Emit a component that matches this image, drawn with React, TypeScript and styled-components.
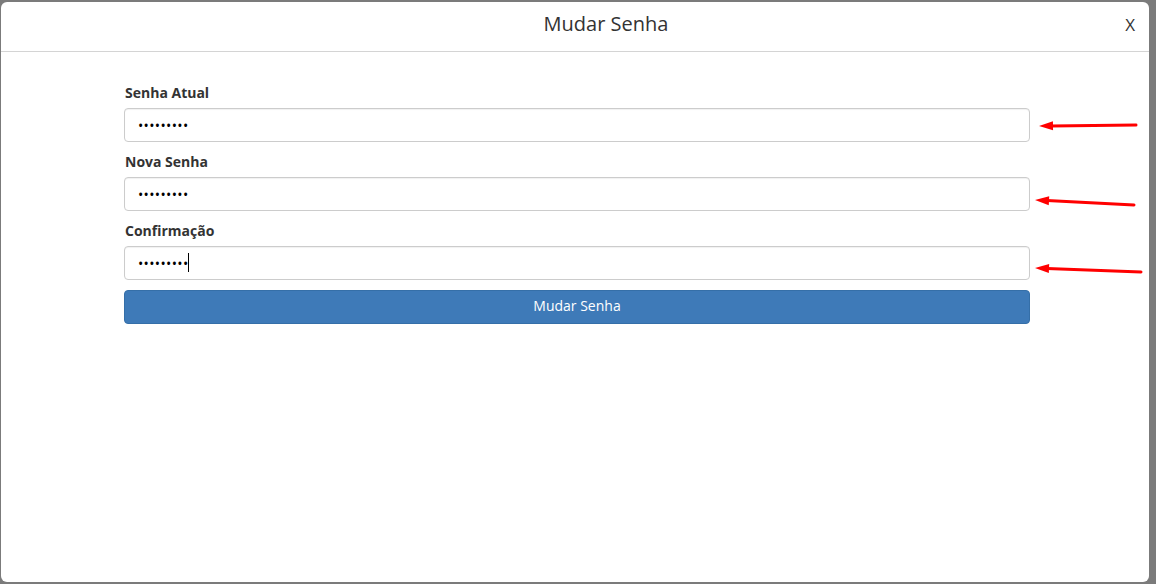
import React from "react";
import styled, { createGlobalStyle } from "styled-components";

const GlobalStyle = createGlobalStyle`
  html, body {
    margin: 0;
    padding: 0;
    background: #7b7b7b;
    font-family: "Open Sans", "Liberation Sans", Arial, sans-serif;
    color: #333;
  }
  * { box-sizing: border-box; }
`;

const fields = [
  { id: "atual", label: "Senha Atual", caret: false },
  { id: "nova", label: "Nova Senha", caret: false },
  { id: "confirmacao", label: "Confirmação", caret: true },
];

export default function App() {
  return (
    <Page>
      <GlobalStyle />
      <Modal>
        <Header>
          <Title>Mudar Senha</Title>
          <Close type="button">X</Close>
        </Header>
        <Body>
          <Form onSubmit={(e) => e.preventDefault()}>
            {fields.map((f) => (
              <Group key={f.id}>
                <Label htmlFor={f.id}>{f.label}</Label>
                <Field>
                  <Input id={f.id} type="password" defaultValue="123456789" />
                  {f.caret && <Caret />}
                </Field>
              </Group>
            ))}
            <Submit type="submit">Mudar Senha</Submit>
          </Form>
        </Body>
        <Arrows width="1156" height="584" viewBox="0 0 1156 584">
          <Arrow x1={1136} y1={125} x2={1039} y2={126} />
          <Arrow x1={1134} y1={205} x2={1035} y2={200} />
          <Arrow x1={1141} y1={272} x2={1035} y2={268} />
        </Arrows>
      </Modal>
    </Page>
  );
}

function Arrow({ x1, y1, x2, y2 }: { x1: number; y1: number; x2: number; y2: number }) {
  const dx = x2 - x1;
  const dy = y2 - y1;
  const len = Math.hypot(dx, dy);
  const ux = dx / len;
  const uy = dy / len;
  const head = 14;
  const half = 4.5;
  const bx = x2 - ux * head;
  const by = y2 - uy * head;
  const pts = [
    `${x2},${y2}`,
    `${bx - uy * half},${by + ux * half}`,
    `${bx + uy * half},${by - ux * half}`,
  ].join(" ");
  return (
    <g>
      <line x1={x1} y1={y1} x2={bx + ux * 2} y2={by + uy * 2} stroke="#f00" strokeWidth={3} strokeLinecap="round" />
      <polygon points={pts} fill="#f00" />
    </g>
  );
}

const Page = styled.div`
  width: 1156px;
  height: 584px;
  padding: 2px 7px 2px 1px;
`;

const Modal = styled.div`
  background: #fff;
  height: 580px;
  border-radius: 6px;
`;

const Header = styled.div`
  height: 50px;
  border-bottom: 1px solid #d4d4d4;
  display: flex;
  align-items: center;
  justify-content: center;
  position: relative;
`;

const Title = styled.h4`
  margin: 0;
  font-size: 20px;
  font-weight: 400;
  color: #333;
  line-height: 1.1;
  padding-bottom: 6px;
  padding-left: 62px;
`;

const Close = styled.button`
  position: absolute;
  right: 14px;
  top: 11px;
  border: 0;
  background: none;
  padding: 0;
  font-family: inherit;
  font-size: 17px;
  color: #333;
  cursor: pointer;
`;

const Body = styled.div`
  padding: 31px 0 0 123px;
`;

const Form = styled.form`
  width: 906px;
  display: flex;
  flex-direction: column;
  gap: 10px;
`;

const Group = styled.div`
  display: flex;
  flex-direction: column;
`;

const Label = styled.label`
  font-size: 14px;
  font-weight: 700;
  line-height: 20px;
  margin-bottom: 5px;
  padding-left: 1px;
  color: #333;
`;

const Field = styled.div`
  position: relative;
  display: flex;
  flex-direction: column;
`;

const Input = styled.input`
  height: 34px;
  padding: 6px 12px 6px 13px;
  font-size: 14px;
  font-family: inherit;
  letter-spacing: 0.35px;
  color: #000;
  border: 1px solid #ccc;
  border-radius: 4px;
  box-shadow: inset 0 1px 1px rgba(0, 0, 0, 0.06);
  outline: none;
`;

const Caret = styled.span`
  position: absolute;
  left: 64px;
  top: 7px;
  width: 1px;
  height: 19px;
  background: #000;
`;

const Submit = styled.button`
  height: 34px;
  border: 1px solid #356fa8;
  border-radius: 4px;
  background: #3e7ab8;
  color: #fff;
  font-family: inherit;
  font-size: 14px;
  line-height: 20px;
  padding: 5px 12px 7px;
  cursor: pointer;
`;

const Arrows = styled.svg`
  position: absolute;
  left: 0;
  top: 0;
  pointer-events: none;
`;
